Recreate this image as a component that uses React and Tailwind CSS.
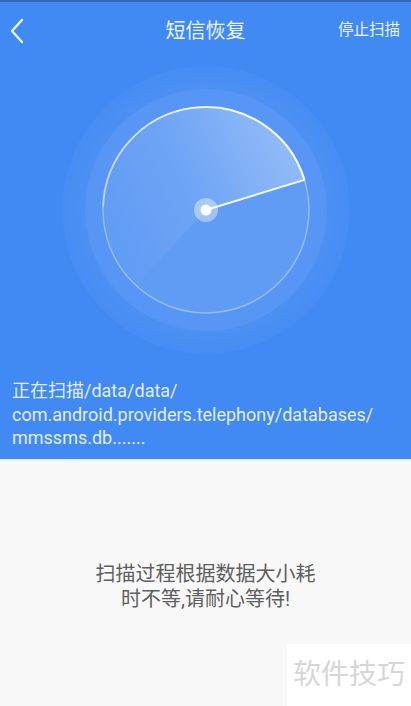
import React from "react";

const CX = 150;
const CY = 150;
const R = 103;

function pt(deg, r) {
  const a = (deg * Math.PI) / 180;
  return [CX + r * Math.cos(a), CY + r * Math.sin(a)];
}

function Radar() {
  const end = -17;
  const start = -227;
  const [ex, ey] = pt(end, R);
  const [x0, y0] = pt(start, R);
  const [sx, sy] = pt(-178, R);
  return (
    <svg width="300" height="300" viewBox="0 0 300 300" className="block mx-auto">
      <defs>
        <linearGradient id="arcg" x1="0" y1="0" x2="1" y2="0">
          <stop offset="0" stopColor="#fff" stopOpacity="0.35" />
          <stop offset="0.4" stopColor="#fff" stopOpacity="0.8" />
          <stop offset="1" stopColor="#fff" stopOpacity="0.95" />
        </linearGradient>
        <linearGradient id="sector" gradientUnits="userSpaceOnUse" x1="55" y1="200" x2="250" y2="115">
          <stop offset="0" stopColor="#fff" stopOpacity="0" />
          <stop offset="0.45" stopColor="#fff" stopOpacity="0.08" />
          <stop offset="1" stopColor="#fff" stopOpacity="0.32" />
        </linearGradient>
        <radialGradient id="halo" cx="0.5" cy="0.5" r="0.5">
          <stop offset="0.8" stopColor="#fff" stopOpacity="0.07" />
          <stop offset="1" stopColor="#fff" stopOpacity="0.03" />
        </radialGradient>
      </defs>
      <circle cx={CX} cy={CY} r="144" fill="url(#halo)" />
      <circle cx={CX} cy={CY} r="121" fill="#ffffff" fillOpacity="0.05" />
      <circle cx={CX} cy={CY} r={R} fill="#ffffff" fillOpacity="0.06" stroke="#ffffff" strokeOpacity="0.35" strokeWidth="1.5" />
      <path
        d={`M${CX} ${CY} L${x0} ${y0} A${R} ${R} 0 1 1 ${ex} ${ey} Z`}
        fill="url(#sector)"
      />
      <path
        d={`M${sx} ${sy} A${R} ${R} 0 0 1 ${ex} ${ey}`}
        fill="none"
        stroke="url(#arcg)"
        strokeWidth="2"
      />
      <line x1={CX} y1={CY} x2={ex} y2={ey} stroke="#ffffff" strokeOpacity="0.95" strokeWidth="2" />
      <circle cx={CX} cy={CY} r="12" fill="#ffffff" fillOpacity="0.4" />
      <circle cx={CX} cy={CY} r="5.5" fill="#ffffff" />
    </svg>
  );
}

export default function App() {
  const font = { fontFamily: "Roboto, 'Noto Sans CJK SC', sans-serif" };
  return (
    <div className="relative w-[411px] h-[706px] bg-[#f8f8f8] overflow-hidden" style={font}>
      <div className="bg-[#4189f3] flex flex-col">
        <div className="h-[2px] bg-[#3566b8]" />
        <div className="h-[58px] flex items-center justify-between pl-[9px] pr-[11px] relative">
          <svg width="18" height="26" viewBox="0 0 18 26" className="block">
            <path d="M13 2 L3 13 L13 24" fill="none" stroke="#eaf2ff" strokeWidth="2.4" strokeLinecap="round" strokeLinejoin="round" />
          </svg>
          <div className="absolute left-0 right-0 text-center text-[20px] text-[#eef4ff] pointer-events-none">短信恢复</div>
          <div className="text-[15.5px] text-[#eef4ff]">停止扫描</div>
        </div>
        <Radar />
        <div className="mt-[19px] px-[12px] pb-[9px] text-[18px] leading-[23.5px] text-[#e4edfd]">
          <div>正在扫描/data/data/</div>
          <div>com.android.providers.telephony/databases/</div>
          <div>mmssms.db.......</div>
        </div>
      </div>
      <div className="h-[2px] bg-[#e6f0fb]" />
      <div className="pt-[101px] text-center text-[20px] leading-[25px] text-[#5e5e5e]">
        <div>扫描过程根据数据大小耗</div>
        <div>时不等,请耐心等待!</div>
      </div>
      <div className="absolute right-0 bottom-0 w-[124px] h-[62px] bg-white flex items-center justify-center text-[28px] text-[#d6d6d6]">
        软件技巧
      </div>
    </div>
  );
}
